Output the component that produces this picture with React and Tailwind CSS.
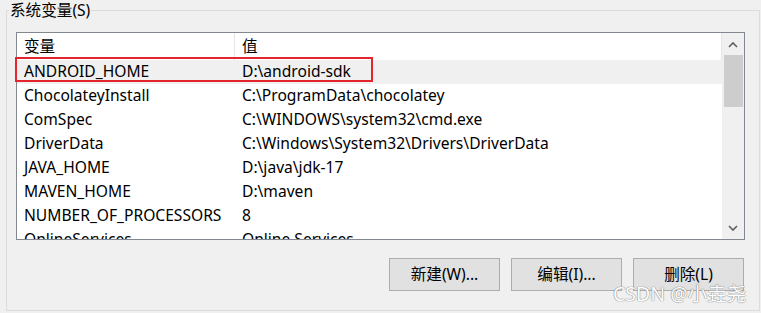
import React from "react";

const rows = [
  ["ANDROID_HOME", "D:\\android-sdk"],
  ["ChocolateyInstall", "C:\\ProgramData\\chocolatey"],
  ["ComSpec", "C:\\WINDOWS\\system32\\cmd.exe"],
  ["DriverData", "C:\\Windows\\System32\\Drivers\\DriverData"],
  ["JAVA_HOME", "D:\\java\\jdk-17"],
  ["MAVEN_HOME", "D:\\maven"],
  ["NUMBER_OF_PROCESSORS", "8"],
  ["OnlineServices", "Online Services"],
];

const font = { fontFamily: '"Noto Sans", "Noto Sans CJK SC", sans-serif' };

function Chevron({ up }) {
  return (
    <svg width="10" height="7" viewBox="0 0 10 7">
      <path
        d={up ? "M1 6 L5 2 L9 6" : "M1 1 L5 5 L9 1"}
        fill="none"
        stroke="#606060"
        strokeWidth="1.6"
      />
    </svg>
  );
}

export default function App() {
  return (
    <div
      className="relative w-[761px] h-[313px] overflow-hidden bg-[#f0f0f0] text-[15.6px] text-black"
      style={font}
    >
      <fieldset className="ml-[6px] w-[754px] h-[311px] border border-[#dcdcdc] p-0 m-0">
        <legend className="ml-[2px] px-[1px] leading-[20px]">系统变量(S)</legend>
        <div className="ml-[9px] mt-[12px] w-[729px] h-[208px] border border-[#828790] bg-white flex overflow-hidden">
          <div className="w-[705px] flex flex-col">
            <div className="h-[27px] shrink-0 flex border-r border-[#e5e5e5] items-center">
              <div className="w-[218px] h-full border-r border-[#e5e5e5] pl-[7px] flex items-center">变量</div>
              <div className="pl-[7px]">值</div>
            </div>
            {rows.map(([k, v], i) => (
              <div
                key={k}
                className={`h-[24px] shrink-0 flex items-center ${i === 0 ? "bg-[#f0f0f0]" : ""}`}
              >
                <div className="w-[218px] pl-[7px] whitespace-nowrap">{k}</div>
                <div className="pl-[7px] whitespace-nowrap">{v}</div>
              </div>
            ))}
          </div>
          <div className="w-[22px] bg-[#f0f0f0] flex flex-col items-center">
            <div className="h-[22px] w-full shrink-0 flex items-center justify-center">
              <Chevron up />
            </div>
            <div className="w-[19px] h-[52px] shrink-0 bg-[#cdcdcd]" />
            <div className="flex-1" />
            <div className="h-[22px] w-full shrink-0 flex items-center justify-center">
              <Chevron />
            </div>
          </div>
        </div>
        <div className="mt-[18px] mr-[15px] flex justify-end gap-[11px]">
          {["新建(W)...", "编辑(I)...", "删除(L)"].map((t) => (
            <div
              key={t}
              className="w-[111px] h-[33px] border border-[#adadad] bg-[#e1e1e1] flex items-center justify-center"
            >
              {t}
            </div>
          ))}
        </div>
      </fieldset>
      <div className="absolute left-[15px] top-[57px] w-[358px] h-[25px] border-2 border-[#e4262c]" />
      <div className="absolute left-[613px] top-[281px] text-[19.5px] leading-[26px] text-white [text-shadow:0_0_1px_#777,0_0_1px_#777]">
        CSDN @小垚尧
      </div>
    </div>
  );
}
